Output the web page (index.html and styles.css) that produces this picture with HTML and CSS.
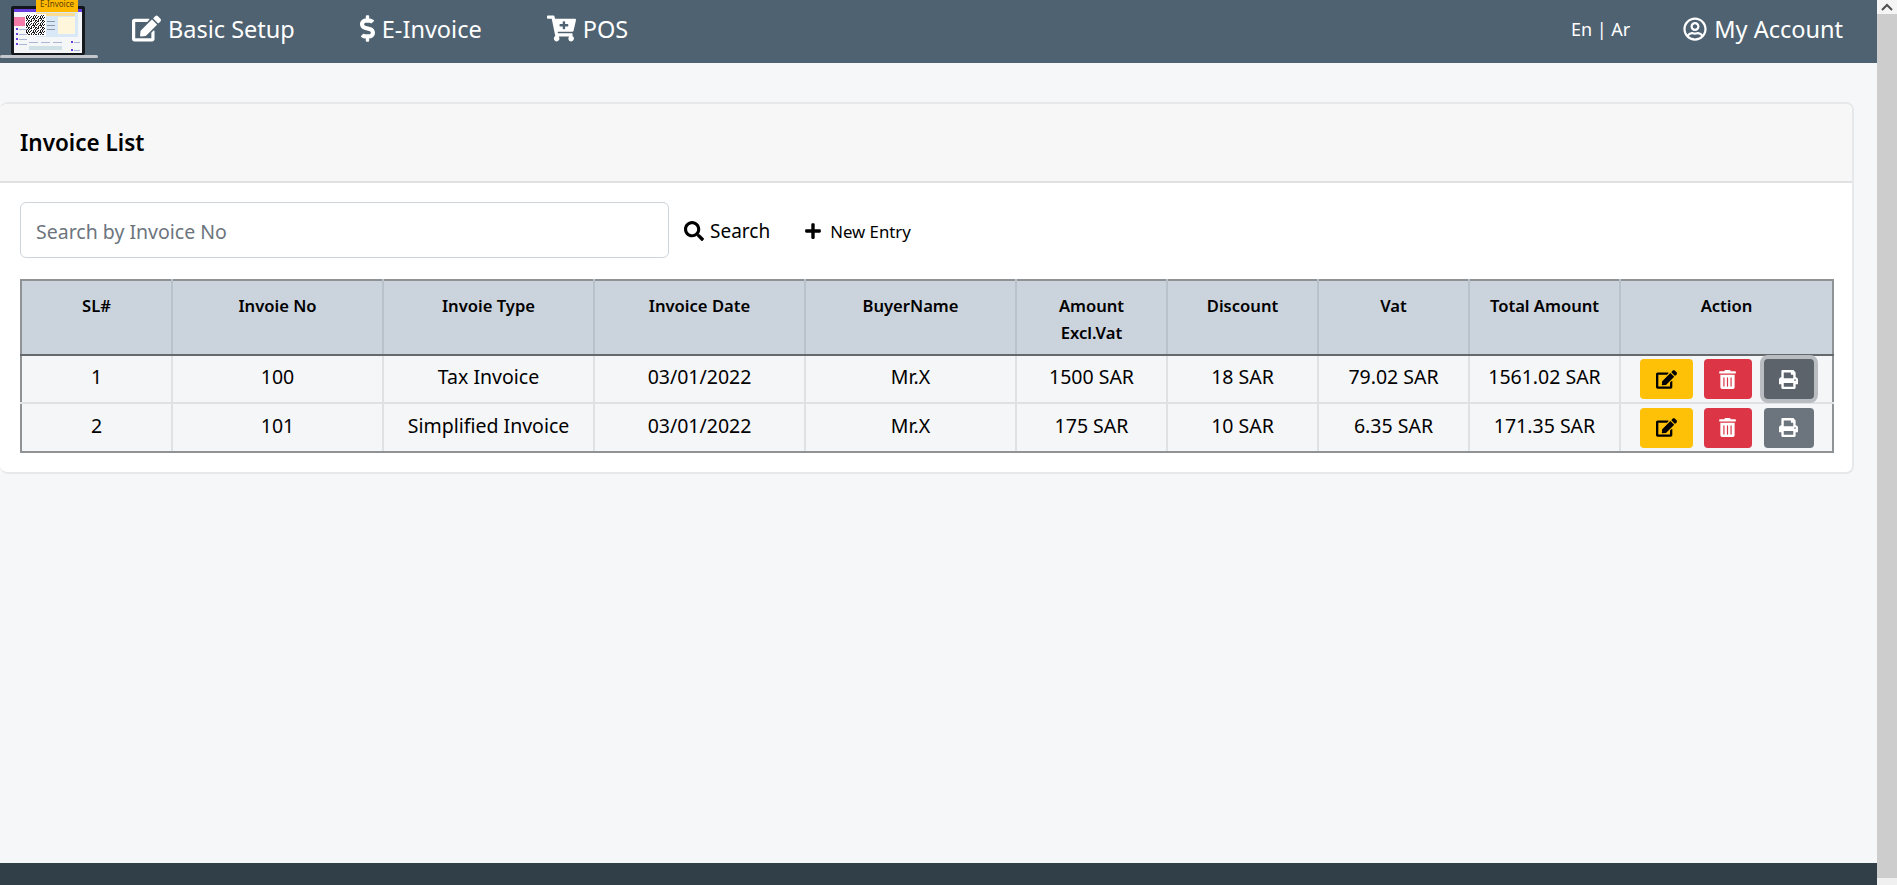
FILE: index.html
```html
<!DOCTYPE html>
<html>
<head>
    <title>Invoice List</title>
    <link rel="stylesheet" href="styles.css">
</head>
<body>
    <!-- icons -->
    <svg class="sprite" xmlns="http://www.w3.org/2000/svg">
        <symbol id="i-edit" viewBox="0 0 576 512"><path d="M402.6 83.2l90.2 90.2c3.8 3.8 3.8 10 0 13.8L274.4 405.6l-92.8 10.3c-12.4 1.4-22.9-9.1-21.5-21.5l10.3-92.8L388.8 83.2c3.8-3.8 10-3.8 13.8 0zm162-22.9l-48.8-48.8c-15.2-15.2-39.9-15.2-55.2 0l-35.4 35.4c-3.8 3.8-3.8 10 0 13.8l90.2 90.2c3.8 3.8 10 3.8 13.8 0l35.4-35.4c15.2-15.3 15.2-40 0-55.2zM384 346.2V448H64V128h229.8c3.2 0 6.2-1.3 8.5-3.5l40-40c7.6-7.6 2.2-20.5-8.5-20.5H48C21.5 64 0 85.5 0 112v352c0 26.5 21.5 48 48 48h352c26.5 0 48-21.5 48-48V306.2c0-10.7-12.9-16-20.5-8.5l-40 40c-2.2 2.3-3.5 5.3-3.5 8.5z"/></symbol>
        <symbol id="i-dollar" viewBox="0 0 288 512"><path d="M209.2 233.4l-108-31.6C88.7 198.2 80 186.5 80 173.5c0-16.3 13.2-29.5 29.5-29.5h66.3c12.2 0 24.2 3.7 34.2 10.5 6.1 4.1 14.3 3.1 19.5-2l34.8-34c7.1-6.9 6.1-18.4-1.8-24.5C238 74.8 207.4 64.1 176 64V16c0-8.8-7.2-16-16-16h-32c-8.8 0-16 7.2-16 16v48h-2.5C45.8 64-5.4 118.7.5 183.6c4.2 46.1 39.4 83.6 83.8 96.6l102.5 30c12.5 3.7 21.2 15.3 21.2 28.3 0 16.3-13.2 29.5-29.5 29.5h-66.3C100 368 88 364.3 78 357.5c-6.1-4.1-14.3-3.1-19.5 2l-34.8 34c-7.1 6.9-6.1 18.4 1.8 24.5 24.5 19.2 55.1 29.9 86.5 30v48c0 8.8 7.2 16 16 16h32c8.8 0 16-7.2 16-16v-48.2c46.6-.9 90.3-28.6 105.7-72.7 21.5-61.6-14.6-124.8-72.5-141.7z"/></symbol>
        <symbol id="i-cart" viewBox="0 0 576 512"><path d="M504.717 320H211.572l6.545 32h268.418c15.401 0 26.816 14.301 23.403 29.319l-5.517 24.276C523.112 414.668 536 433.828 536 456c0 31.202-25.519 56.444-56.824 55.994-29.823-.429-54.35-24.631-55.155-54.447-.44-16.287 6.085-31.049 16.803-41.548H231.176C241.553 426.165 248 440.326 248 456c0 31.813-26.528 57.431-58.67 55.938-28.54-1.325-51.751-24.385-53.251-52.917-1.158-22.034 10.436-41.455 28.051-51.586L93.883 64H24C10.745 64 0 53.255 0 40V24C0 10.745 10.745 0 24 0h102.529c11.401 0 21.228 8.021 23.513 19.19L159.208 64H551.99c15.401 0 26.816 14.301 23.403 29.319l-47.273 208C525.637 312.246 515.923 320 504.717 320zM408 168h-48v-40c0-8.837-7.163-16-16-16h-16c-8.837 0-16 7.163-16 16v40h-48c-8.837 0-16 7.163-16 16v16c0 8.837 7.163 16 16 16h48v40c0 8.837 7.163 16 16 16h16c8.837 0 16-7.163 16-16v-40h48c8.837 0 16-7.163 16-16v-16c0-8.837-7.163-16-16-16z"/></symbol>
        <symbol id="i-user" viewBox="0 0 496 512"><path d="M248 104c-53 0-96 43-96 96s43 96 96 96 96-43 96-96-43-96-96-96zm0 144c-26.5 0-48-21.5-48-48s21.5-48 48-48 48 21.5 48 48-21.5 48-48 48zm0-240C111 8 0 119 0 256s111 248 248 248 248-111 248-248S385 8 248 8zm0 448c-49.7 0-95.1-18.3-130.1-48.4 14.9-23 40.4-38.6 69.6-39.5 20.8 6.4 40.6 9.6 60.5 9.6s39.7-3.1 60.5-9.6c29.2 1 54.7 16.5 69.6 39.5-35 30.1-80.4 48.4-130.1 48.4zm162.7-84.1c-24.4-31.4-62.1-51.9-105.1-51.9-10.2 0-26 9.6-57.6 9.6-31.5 0-47.4-9.6-57.6-9.6-42.9 0-80.6 20.5-105.1 51.9C61.9 339.2 48 299.2 48 256c0-110.3 89.7-200 200-200s200 89.7 200 200c0 43.2-13.9 83.2-37.3 115.9z"/></symbol>
        <symbol id="i-search" viewBox="0 0 512 512"><path d="M505 442.7L405.3 343c-4.5-4.5-10.6-7-17-7H372c27.6-35.3 44-79.7 44-128C416 93.1 322.9 0 208 0S0 93.1 0 208s93.1 208 208 208c48.3 0 92.7-16.4 128-44v16.3c0 6.4 2.5 12.5 7 17l99.7 99.7c9.4 9.4 24.6 9.4 33.9 0l28.3-28.3c9.4-9.4 9.4-24.6.1-34zM208 336c-70.7 0-128-57.2-128-128 0-70.7 57.2-128 128-128 70.7 0 128 57.2 128 128 0 70.7-57.2 128-128 128z"/></symbol>
        <symbol id="i-plus" viewBox="0 0 448 512"><path d="M416 208H272V64c0-17.67-14.33-32-32-32h-32c-17.67 0-32 14.33-32 32v144H32c-17.67 0-32 14.33-32 32v32c0 17.67 14.33 32 32 32h144v144c0 17.67 14.33 32 32 32h32c17.67 0 32-14.33 32-32V304h144c17.67 0 32-14.33 32-32v-32c0-17.67-14.33-32-32-32z"/></symbol>
        <symbol id="i-trash" viewBox="0 0 448 512"><path d="M32 464a48 48 0 0 0 48 48h288a48 48 0 0 0 48-48V128H32zm272-256a16 16 0 0 1 32 0v224a16 16 0 0 1-32 0zm-96 0a16 16 0 0 1 32 0v224a16 16 0 0 1-32 0zm-96 0a16 16 0 0 1 32 0v224a16 16 0 0 1-32 0zM432 32H312l-9.4-18.7A24 24 0 0 0 281.1 0H166.8a23.72 23.72 0 0 0-21.4 13.3L136 32H16A16 16 0 0 0 0 48v32a16 16 0 0 0 16 16h416a16 16 0 0 0 16-16V48a16 16 0 0 0-16-16z"/></symbol>
        <symbol id="i-print" viewBox="0 0 512 512"><path d="M448 192V77.25c0-8.49-3.37-16.62-9.37-22.63L393.37 9.37c-6-6-14.14-9.37-22.63-9.37H96C78.33 0 64 14.33 64 32v160c-35.35 0-64 28.65-64 64v112c0 8.84 7.16 16 16 16h48v96c0 17.67 14.33 32 32 32h320c17.67 0 32-14.33 32-32v-96h48c8.84 0 16-7.16 16-16V256c0-35.35-28.65-64-64-64zm-64 256H128v-96h256v96zm0-224H128V64h192v48c0 8.84 7.16 16 16 16h48v96zm48 72c-13.25 0-24-10.75-24-24 0-13.26 10.75-24 24-24s24 10.74 24 24c0 13.25-10.75 24-24 24z"/></symbol>
        <pattern id="qr" width="7" height="7" patternUnits="userSpaceOnUse">
            <path d="M0 0h1v1H0zM2 0h2v1H2zM6 1h1v1H6zM1 1h1v1H1zM3 2h1v1H3zM0 2h1v2H0zM5 2h1v2H5zM2 3h1v1H2zM4 4h3v1H4zM1 4h1v1H1zM3 5h1v2H3zM6 5h1v1H6zM0 6h2v1H0zM5 6h1v1H5z" fill="#1c1c1c"/>
        </pattern>
    </svg>

    <div class="page">
        <div class="main">
            <!-- top nav -->
            <nav class="topbar">
                <svg class="brand" viewBox="0 0 98 58" xmlns="http://www.w3.org/2000/svg">
                    <rect x="11" y="6" width="74" height="49" rx="2" fill="#14171c"/>
                    <rect x="14" y="9" width="68" height="44" fill="#f4f6f8"/>
                    <rect x="14" y="9" width="68" height="3" fill="#6a3fe0"/>
                    <rect x="14" y="17" width="12" height="9" fill="#f57ba8"/>
                    <rect x="36" y="12" width="42" height="25" fill="#d8e8f6"/>
                    <rect x="58" y="17" width="17" height="17" fill="#fff6dc"/>
                    <rect x="36" y="13" width="39" height="3" fill="#fbdc93"/>
                    <rect x="25" y="14" width="21" height="22" fill="#fff"/>
                    <rect x="26" y="15" width="19" height="20" fill="url(#qr)"/>
                    <path d="M47 21h8v1h-8zM47 25h8v1h-8zM47 29h8v1h-8z" fill="#8e97a6"/>
                    <path d="M16 28h2v2h-2zM16 33h2v2h-2zM16 38h2v2h-2zM16 43h2v2h-2zM71 41h2v2h-2zM71 49h2v2h-2z" fill="#6a3fe0"/>
                    <path d="M19 29h8v1h-8zM19 34h8v1h-8zM19 39h8v1h-8zM19 44h8v1h-8zM74 42h6v1h-6zM74 50h6v1h-6zM29 42h9v1h-9zM41 42h9v1h-9zM53 42h9v1h-9z" fill="#a9b6d6"/>
                    <rect x="29" y="46" width="33" height="4" fill="#cfe0e6"/>
                    <rect x="36" y="0" width="42" height="12" fill="#ffb800"/>
                    <text x="57" y="7" text-anchor="middle" class="brand-text">E-Invoice</text>
                    <rect x="0" y="55" width="98" height="3" rx="1.5" fill="#c4c8cc"/>
                </svg>
                <a class="nav-link first"><svg class="nav-icon"><use href="#i-edit"/></svg>Basic Setup</a>
                <a class="nav-link"><svg class="nav-icon dollar"><use href="#i-dollar"/></svg>E-Invoice</a>
                <a class="nav-link"><svg class="nav-icon"><use href="#i-cart"/></svg>POS</a>
                <span class="lang">En | Ar</span>
                <a class="nav-link account"><svg class="nav-icon user"><use href="#i-user"/></svg>My Account</a>
            </nav>

            <div class="content">
                <div class="card">
                    <div class="card-header">Invoice List</div>
                    <div class="card-body">
                        <!-- search row -->
                        <form class="search-row">
                            <input class="search-input" type="text" placeholder="Search by Invoice No">
                            <button class="link-btn search-btn" type="button"><svg><use href="#i-search"/></svg>Search</button>
                            <button class="link-btn new-btn" type="button"><svg><use href="#i-plus"/></svg>New Entry</button>
                        </form>

                        <table class="invoices">
                            <colgroup>
                                <col class="c-sl"><col class="c-wide"><col class="c-wide"><col class="c-wide"><col class="c-wide">
                                <col class="c-num"><col class="c-num"><col class="c-num"><col class="c-num"><col class="c-act">
                            </colgroup>
                            <thead>
                                <tr>
                                    <th>SL#</th>
                                    <th>Invoie No</th>
                                    <th>Invoie Type</th>
                                    <th>Invoice Date</th>
                                    <th>BuyerName</th>
                                    <th>Amount<br>Excl.Vat</th>
                                    <th>Discount</th>
                                    <th>Vat</th>
                                    <th>Total Amount</th>
                                    <th>Action</th>
                                </tr>
                            </thead>
                            <tbody>
                                <tr>
                                    <td>1</td>
                                    <td>100</td>
                                    <td>Tax Invoice</td>
                                    <td>03/01/2022</td>
                                    <td>Mr.X</td>
                                    <td>1500 SAR</td>
                                    <td>18 SAR</td>
                                    <td>79.02 SAR</td>
                                    <td>1561.02 SAR</td>
                                    <td class="actions">
                                        <div class="action-row">
                                            <button class="btn btn-edit"><svg><use href="#i-edit"/></svg></button>
                                            <button class="btn btn-del"><svg><use href="#i-trash"/></svg></button>
                                            <button class="btn btn-print focused"><svg><use href="#i-print"/></svg></button>
                                        </div>
                                    </td>
                                </tr>
                                <tr>
                                    <td>2</td>
                                    <td>101</td>
                                    <td>Simplified Invoice</td>
                                    <td>03/01/2022</td>
                                    <td>Mr.X</td>
                                    <td>175 SAR</td>
                                    <td>10 SAR</td>
                                    <td>6.35 SAR</td>
                                    <td>171.35 SAR</td>
                                    <td class="actions">
                                        <div class="action-row">
                                            <button class="btn btn-edit"><svg><use href="#i-edit"/></svg></button>
                                            <button class="btn btn-del"><svg><use href="#i-trash"/></svg></button>
                                            <button class="btn btn-print"><svg><use href="#i-print"/></svg></button>
                                        </div>
                                    </td>
                                </tr>
                            </tbody>
                        </table>
                    </div>
                </div>
            </div>

            <footer class="footer"></footer>
        </div>

        <!-- window scrollbar -->
        <div class="scrollbar">
            <div class="scroll-up"><svg viewBox="0 0 20 14"><path d="M5 10l5-5 5 5" fill="none" stroke="#505050" stroke-width="2"/></svg></div>
            <div class="scroll-thumb"></div>
            <div class="scroll-rest"></div>
        </div>
    </div>
</body>
</html>
```

FILE: styles.css
```css
:root {
    --nav: #4f6271;
    --foot: #313f48;
    --page: #f5f7f9;
    --line: #dfe2e5;
    --edge: #8f9396;
}

* {
    box-sizing: border-box;
}

html, body {
    margin: 0;
    height: 100%;
    overflow: hidden;
}

body {
    font-family: "Noto Sans", "Open Sans", sans-serif;
    color: #000;
    background-color: var(--page);
}

.sprite {
    width: 0;
    height: 0;
    display: block;
}

.page {
    display: flex;
    height: 885px;
}

.main {
    flex: 1;
    display: flex;
    flex-direction: column;
    min-width: 0;
}

/* top nav */
.topbar {
    height: 63px;
    flex: none;
    display: flex;
    align-items: center;
    background-color: var(--nav);
    color: #fff;
    padding-right: 34px;
    padding-bottom: 6px;
}

.brand {
    width: 98px;
    height: 58px;
    align-self: flex-start;
}

.brand-text {
    font-size: 8px;
    fill: #5a4100;
}

.nav-link {
    display: flex;
    align-items: center;
    gap: 7px;
    font-size: 23.5px;
    margin-left: 65px;
}

.nav-link.first {
    margin-left: 34px;
}

.nav-icon {
    width: 29px;
    height: 27px;
    fill: #fff;
}

.nav-icon.dollar {
    width: 15px;
}

.nav-icon.user {
    width: 24px;
    height: 24px;
}

.lang {
    margin-left: auto;
    font-size: 18px;
}

.nav-link.account {
    margin-left: 53px;
}

/* card */
.content {
    flex: 1;
    padding-top: 39px;
    padding-right: 23px;
}

.card {
    background-color: #fff;
    border: 2px solid #e6e8ea;
    border-left-width: 0;
    border-radius: 8px;
}

.card-header {
    height: 79px;
    display: flex;
    align-items: center;
    padding-left: 20px;
    background-color: #f7f7f7;
    border-bottom: 2px solid #e0e1e2;
    border-radius: 8px 8px 0 0;
    font-size: 22.5px;
    font-weight: 600;
}

.card-body {
    padding: 19px 20px 19px 20px;
}

.search-row {
    display: flex;
    align-items: center;
    margin-bottom: 21px;
}

.search-input {
    width: 649px;
    height: 56px;
    padding: 2px 15px 0;
    border: 1px solid #ced4da;
    border-radius: 6px;
    font-family: inherit;
    font-size: 19.5px;
    outline: none;
}

.search-input::placeholder {
    color: #6c757d;
}

.link-btn {
    display: flex;
    align-items: center;
    border: none;
    background: none;
    padding: 2px 0 0;
    font-family: inherit;
    color: #000;
}

.link-btn svg {
    display: block;
}

.search-btn {
    margin-left: 15px;
    gap: 6px;
    font-size: 19px;
}

.search-btn svg {
    width: 20px;
    height: 20px;
}

.new-btn {
    margin-left: 35px;
    gap: 9px;
    font-size: 16.8px;
}

.new-btn svg {
    width: 16px;
    height: 18px;
}

/* table */
.invoices {
    width: 1812px;
    table-layout: fixed;
    border-collapse: collapse;
    border: 2px solid var(--edge);
}

.c-sl { width: 151px; }
.c-wide { width: 211px; }
.c-num { width: 151px; }
.c-act { width: 213px; }

.invoices th {
    height: 75px;
    padding: 11px 4px 0;
    vertical-align: top;
    background-color: #cbd3dc;
    border: 2px solid #b9c1ca;
    border-bottom: 2px solid #66696c;
    border-top-color: var(--edge);
    font-size: 16.6px;
    font-weight: 600;
    line-height: 27px;
}

.invoices td {
    height: 48px;
    padding: 0 0 5px;
    text-align: center;
    background-color: #f5f6f8;
    border: 2px solid var(--line);
    font-size: 19.5px;
}

.invoices tbody tr:last-child td {
    height: 49px;
    border-bottom-color: var(--edge);
}

/* outer edge wins over cell lines */
.invoices th:first-child,
.invoices td:first-child {
    border-left-color: var(--edge);
}

.invoices th:last-child,
.invoices td:last-child {
    border-right-color: var(--edge);
}

.invoices td.actions {
    padding: 0;
}

/* action buttons */
.action-row {
    display: flex;
    justify-content: center;
    gap: 11px;
}

.btn {
    display: flex;
    align-items: center;
    justify-content: center;
    height: 40px;
    border: none;
    border-radius: 4px;
    padding: 0;
}

.btn svg {
    height: 19px;
    width: 21px;
}

.btn-edit {
    width: 53px;
    background-color: #ffc107;
    fill: #000;
}

.btn-del {
    width: 48px;
    background-color: #dc3545;
    fill: #fff;
}

.btn-print {
    width: 50px;
    margin-left: 1px;
    background-color: #6c757d;
    fill: #fff;
}

.btn-print.focused {
    background-color: #5c636a;
    box-shadow: 0 0 0 4px #b9bdc2;
}

.footer {
    height: 22px;
    flex: none;
    background-color: var(--foot);
}

/* fake window scrollbar */
.scrollbar {
    width: 20px;
    flex: none;
    display: flex;
    flex-direction: column;
    background-color: #f0f0f0;
}

.scroll-up {
    height: 14px;
    background-color: #f5f5f5;
}

.scroll-up svg {
    display: block;
    width: 20px;
    height: 14px;
}

.scroll-thumb {
    height: 864px;
    background-color: #cdcdcd;
}

.scroll-rest {
    flex: 1;
}
```
